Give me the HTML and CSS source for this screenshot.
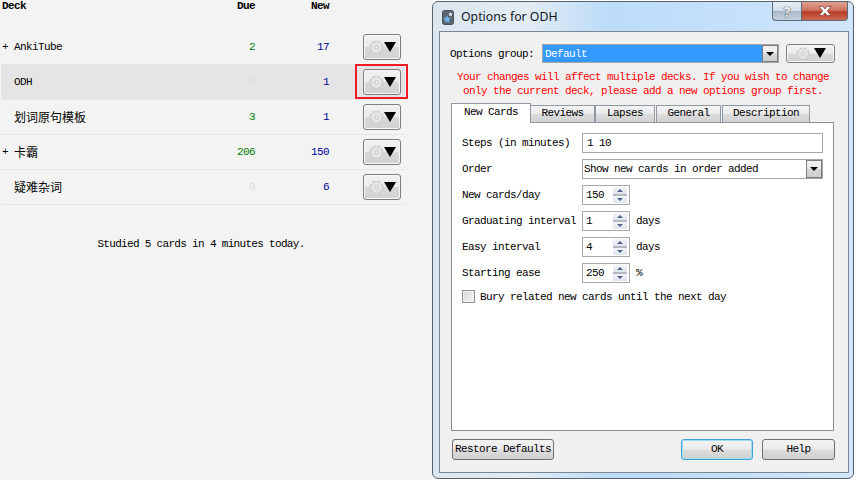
FILE: index.html
```html
<!DOCTYPE html>
<html lang="en">
<head>
    <meta charset="utf-8" />
    <title>Options for ODH</title>
    <link rel="stylesheet" href="styles.css">
</head>
<body>

    <svg class="defs" width="0" height="0">
        <symbol id="gear" viewBox="0 0 16 16">
            <circle cx="8" cy="8" r="6.9" fill="none" stroke="#cacaca" stroke-width="1.3" stroke-dasharray="3.6 1.8"/>
            <circle cx="8" cy="8" r="6" fill="#e6e6e6" stroke="#d0d0d0"/>
            <circle cx="8" cy="8" r="2" fill="#ececec" stroke="#c4c4c4"/>
        </symbol>
        <symbol id="drop" viewBox="0 0 12 10">
            <path d="M0 0H12L6 10Z" fill="#000"/>
        </symbol>
    </svg>

    <div id="decks">
        <div class="cols head">
            <span>Deck</span>
            <span class="num">Due</span>
            <span class="num">New</span>
        </div>

        <div class="cols row">
            <span class="name"><i>+</i>AnkiTube</span>
            <span class="num due">2</span>
            <span class="num new">17</span>
            <button class="gearBtn"><svg class="gear"><use href="#gear"/></svg><svg class="drop"><use href="#drop"/></svg></button>
        </div>
        <div class="cols row current">
            <span class="name"><i></i>ODH</span>
            <span class="num zero">0</span>
            <span class="num new">1</span>
            <button class="gearBtn"><svg class="gear"><use href="#gear"/></svg><svg class="drop"><use href="#drop"/></svg></button>
            <div class="redbox"></div>
        </div>
        <div class="cols row">
            <span class="name cjk"><i></i>划词原句模板</span>
            <span class="num due">3</span>
            <span class="num new">1</span>
            <button class="gearBtn"><svg class="gear"><use href="#gear"/></svg><svg class="drop"><use href="#drop"/></svg></button>
        </div>
        <div class="cols row">
            <span class="name cjk"><i>+</i>卡霸</span>
            <span class="num due">206</span>
            <span class="num new">150</span>
            <button class="gearBtn"><svg class="gear"><use href="#gear"/></svg><svg class="drop"><use href="#drop"/></svg></button>
        </div>
        <div class="cols row">
            <span class="name cjk"><i></i>疑难杂词</span>
            <span class="num zero">0</span>
            <span class="num new">6</span>
            <button class="gearBtn"><svg class="gear"><use href="#gear"/></svg><svg class="drop"><use href="#drop"/></svg></button>
        </div>

        <p class="studied">Studied 5 cards in 4 minutes today.</p>
    </div>

    <div id="dialog">
        <div class="titlebar">
            <svg class="appicon" viewBox="0 0 12 15">
                <rect x="0.5" y="0.5" width="11" height="14" rx="2" fill="#5b6570" stroke="#47505a"/>
                <path d="M8.5 2 9.3 3.4 10.8 3.6 9.7 4.7 10 6.2 8.5 5.5 7 6.2 7.3 4.7 6.2 3.6 7.7 3.4Z" fill="#dbe6f2"/>
                <path d="M5 5.5 6.2 7.8 8.8 8.2 6.9 10 7.4 12.6 5 11.4 2.6 12.6 3.1 10 1.2 8.2 3.8 7.8Z" fill="#6fb5f0"/>
            </svg>
            <span class="title">Options for ODH</span>
            <div class="caption">
                <div class="capBtn help">?</div>
                <div class="capBtn close">
                    <svg viewBox="0 0 14 10" width="14" height="10"><path d="M1 .5H5L7 3 9 .5H13L9.3 5 13 9.5H9L7 7 5 9.5H1L4.7 5Z" fill="#fff" stroke="#7a3a30" stroke-width="0.7"/></svg>
                </div>
            </div>
        </div>

        <div class="content">
            <div class="groupRow">
                <span class="groupLbl">Options group:</span>
                <div class="combo groupCombo">
                    <span class="selected">Default</span>
                    <span class="comboArrow"></span>
                </div>
                <button class="gearBtn wide"><svg class="gear"><use href="#gear"/></svg><svg class="drop"><use href="#drop"/></svg></button>
            </div>

            <p class="warning">Your changes will affect multiple decks. If you wish to change<br>only the current deck, please add a new options group first.</p>

            <div class="tabs">
                <div class="tab active">New Cards</div>
                <div class="tab w-reviews">Reviews</div>
                <div class="tab w-lapses">Lapses</div>
                <div class="tab w-general">General</div>
                <div class="tab w-desc">Description</div>
            </div>

            <div class="panel">
                <div class="formRow">
                    <label>Steps (in minutes)</label>
                    <div class="field grow">1 10</div>
                </div>
                <div class="formRow">
                    <label>Order</label>
                    <div class="combo grow">
                        <span class="comboText">Show new cards in order added</span>
                        <span class="comboArrow"></span>
                    </div>
                </div>
                <div class="formRow">
                    <label>New cards/day</label>
                    <div class="spin"><span>150</span><div class="spinBtns"><b class="up"></b><b class="down"></b></div></div>
                </div>
                <div class="formRow">
                    <label>Graduating interval</label>
                    <div class="spin"><span>1</span><div class="spinBtns"><b class="up"></b><b class="down"></b></div></div>
                    <span class="suffix">days</span>
                </div>
                <div class="formRow">
                    <label>Easy interval</label>
                    <div class="spin"><span>4</span><div class="spinBtns"><b class="up"></b><b class="down"></b></div></div>
                    <span class="suffix">days</span>
                </div>
                <div class="formRow">
                    <label>Starting ease</label>
                    <div class="spin"><span>250</span><div class="spinBtns"><b class="up"></b><b class="down"></b></div></div>
                    <span class="suffix">%</span>
                </div>
                <div class="checkRow">
                    <span class="check"></span>
                    <span>Bury related new cards until the next day</span>
                </div>
            </div>

            <div class="footer">
                <button class="btn restore">Restore Defaults</button>
                <button class="btn ok">OK</button>
                <button class="btn helpBtn">Help</button>
            </div>
        </div>
    </div>

</body>
</html>
```

FILE: styles.css
```css
* {
    box-sizing: border-box;
}

body {
    margin: 0;
    width: 857px;
    height: 480px;
    overflow: hidden;
    display: flex;
    background: #fff;
    color: #000;
    font-family: "Liberation Mono", "Noto Sans CJK SC", monospace;
    font-size: 11px;
    letter-spacing: -0.6px;
}

.defs {
    position: absolute;
}

/* deck list */
#decks {
    width: 432px;
    padding-left: 1px;
    background: #f3f3f3;
}

.cols {
    width: 404px;
    display: grid;
    grid-template-columns: 194px 60px 74px 1fr;
    align-items: center;
}

.head {
    height: 30px;
    align-items: start;
    font-weight: bold;
    line-height: 13px;
    padding-left: 1px;
    grid-template-columns: 193px 60px 74px 1fr;
}

.num {
    text-align: right;
}

.row {
    position: relative;
    height: 35px;
    border-bottom: 1px solid #e6e6e6;
}

.current {
    background: #e5e5e5;
}

.name {
    display: flex;
    align-items: center;
}

.name i {
    width: 13px;
    padding-left: 1px;
    font-style: normal;
    font-size: 11px;
}

.cjk {
    font-size: 12px;
    letter-spacing: 0;
}

.due {
    color: #007a00;
}

.new {
    color: #000099;
}

.zero {
    color: #dedede;
}

.gearBtn {
    justify-self: end;
    margin: 0 4px 0 0;
    padding: 0;
    width: 38px;
    height: 26px;
    border: 1px solid #7d7d7d;
    border-radius: 3px;
    background: linear-gradient(#f1f1f1 0, #ececec 48%, #d8d8d8 52%, #d2d2d2 100%);
    box-shadow: inset 0 0 0 1px #f7f7f7;
    display: flex;
    align-items: center;
    justify-content: center;
}

.gear {
    width: 15px;
    height: 15px;
}

.drop {
    width: 12px;
    height: 10px;
    margin-top: -1px;
}

.redbox {
    position: absolute;
    left: 354px;
    top: -1px;
    width: 53px;
    height: 35px;
    border: 2px solid #ed1c24;
}

.studied {
    width: 400px;
    margin: 32px 0 0;
    text-align: center;
    line-height: 14px;
    letter-spacing: -0.68px;
}

/* options window */
#dialog {
    width: 422px;
    height: 478px;
    margin-top: 1px;
    border: 1px solid #56626e;
    border-radius: 6px;
    background: linear-gradient(90deg, #dbe6ef 0, #e3ecf4 22%, #bcdcf8 42%, #c4e0fa 70%, #d2e6fb 100%);
    padding: 0 4px 5px 6px;
    display: flex;
    flex-direction: column;
}

.titlebar {
    height: 29px;
    flex: none;
    display: flex;
    align-items: flex-start;
    font-family: "Noto Sans", sans-serif;
    letter-spacing: 0;
}

.appicon {
    width: 12px;
    height: 15px;
    margin: 8px 0 0 3px;
}

.title {
    margin: 6px 0 0 7px;
    font-size: 12.3px;
    line-height: 17px;
    color: #10151c;
}

.caption {
    margin-left: auto;
    display: flex;
    height: 19px;
    margin-right: 1px;
}

.capBtn {
    height: 19px;
    display: flex;
    align-items: center;
    justify-content: center;
    border: 1px solid #5f6b78;
    border-top: 0;
}

.help {
    width: 29px;
    border-right: 0;
    border-radius: 0 0 0 4px;
    background: linear-gradient(#e6eef6 0, #d2dde8 48%, #aab9c8 52%, #c4d2de 100%);
    color: #f6f8fa;
    font-size: 14px;
    font-weight: bold;
    text-shadow: 0 0 1px #2a3038, 0 0 1px #2a3038;
}

.close {
    width: 47px;
    border-radius: 0 0 4px 0;
    background: linear-gradient(#dfa192 0, #cf7462 45%, #b93c26 55%, #cd6a54 100%);
}

.content {
    flex: 1;
    border: 1px solid #7a8794;
    background: #f0f0f0;
    padding: 12px 10px 0;
    display: flex;
    flex-direction: column;
}

.groupRow {
    display: flex;
    align-items: center;
    height: 19px;
}

.groupLbl {
    width: 92px;
}

.combo {
    display: flex;
    align-items: stretch;
    border: 1px solid #a5a5a5;
    background: #fff;
}

.groupCombo {
    width: 237px;
    height: 19px;
}

.selected {
    flex: 1;
    padding-left: 2px;
    background: #3399ff;
    color: #fff;
    line-height: 18px;
}

.comboArrow {
    width: 16px;
    flex: none;
    border: 1px solid #7d7d7d;
    background: linear-gradient(#f2f2f2 0, #ebebeb 48%, #d6d6d6 52%, #cfcfcf 100%);
    position: relative;
}

.comboArrow::after {
    content: "";
    position: absolute;
    left: 3px;
    top: 6px;
    border: 4px solid transparent;
    border-top: 4px solid #000;
    border-bottom: 0;
}

.gearBtn.wide {
    width: 49px;
    height: 19px;
    margin: 0 0 0 7px;
}

.gearBtn.wide .gear {
    width: 14px;
    height: 14px;
}

.gearBtn.wide .drop {
    margin-left: 4px;
    margin-top: -2px;
}

.warning {
    margin: 7px 0 0;
    color: #ff0000;
    text-align: center;
    line-height: 14px;
    padding-right: 2px;
}

.tabs {
    display: flex;
    align-items: flex-end;
    margin: 5px 0 -1px 1px;
    height: 20px;
    position: relative;
    z-index: 1;
}

.tab {
    height: 18px;
    margin-left: -1px;
    text-align: center;
    line-height: 15px;
    border: 1px solid #8f98a3;
    background: linear-gradient(#f4f4f4 0, #ebebeb 48%, #dcdcdc 52%, #d2d2d2 100%);
}

.tab.active {
    width: 80px;
    height: 20px;
    margin-left: 0;
    background: #fff;
    border-bottom: 0;
    line-height: 17px;
}

.w-reviews {
    width: 65px;
}

.w-lapses {
    width: 60px;
    margin-left: 0;
}

.w-general {
    width: 65px;
    margin-left: 1px;
}

.w-desc {
    width: 88px;
    margin-left: 1px;
}

.panel {
    height: 309px;
    margin-left: 1px;
    margin-right: 4px;
    flex: none;
    border: 1px solid #898c95;
    background: #fff;
    padding: 10px 10px 0;
    display: flex;
    flex-direction: column;
    gap: 6px;
}

.formRow {
    display: flex;
    align-items: center;
    height: 20px;
}

.formRow label {
    width: 120px;
    flex: none;
}

.grow {
    flex: 1;
    height: 20px;
}

.field {
    border: 1px solid #a8a8a8;
    padding-left: 4px;
    line-height: 18px;
}

.comboText {
    flex: 1;
    padding-left: 1px;
    line-height: 18px;
}

.spin {
    width: 48px;
    height: 20px;
    flex: none;
    display: flex;
    border: 1px solid #a8a8a8;
    line-height: 18px;
    padding: 0 1px 0 3px;
}

.spin span {
    flex: 1;
}

.spinBtns {
    width: 14px;
    margin: 1px 1px 1px 0;
    display: flex;
    flex-direction: column;
    gap: 2px;
    background: #b4b8c0;
}

.spinBtns b {
    flex: 1;
    position: relative;
    background: linear-gradient(#f2f4f8, #dfe4ec);
}

.spinBtns b::after {
    content: "";
    position: absolute;
    left: 4px;
    top: 2px;
    border: 3px solid transparent;
}

.up::after {
    border-top: 0 !important;
    border-bottom-color: #4d6185 !important;
}

.down::after {
    border-bottom: 0 !important;
    border-top-color: #4d6185 !important;
}

.suffix {
    margin-left: 6px;
}

.checkRow {
    display: flex;
    align-items: center;
    gap: 5px;
    margin-top: 1px;
    height: 13px;
}

.check {
    width: 13px;
    height: 13px;
    border: 1px solid #8e8f8f;
    background: linear-gradient(135deg, #d6d6d6, #f4f4f4);
    box-shadow: inset 0 0 0 1px #f4f4f4;
}

.footer {
    display: flex;
    align-items: flex-start;
    margin-top: 8px;
    padding-left: 2px;
}

.btn {
    height: 21px;
    padding: 0 0 2px;
    border: 1px solid #707070;
    border-radius: 3px;
    background: linear-gradient(#f2f2f2 0, #ebebeb 48%, #dddddd 52%, #cfcfcf 100%);
    font: inherit;
    letter-spacing: inherit;
    color: #000;
}

.restore {
    width: 102px;
}

.ok {
    width: 72px;
    margin-left: auto;
    border-color: #3c9fd6;
    box-shadow: inset 0 0 0 1px #9fdcf5;
}

.helpBtn {
    width: 73px;
    margin: 0 3px 0 9px;
}
```
